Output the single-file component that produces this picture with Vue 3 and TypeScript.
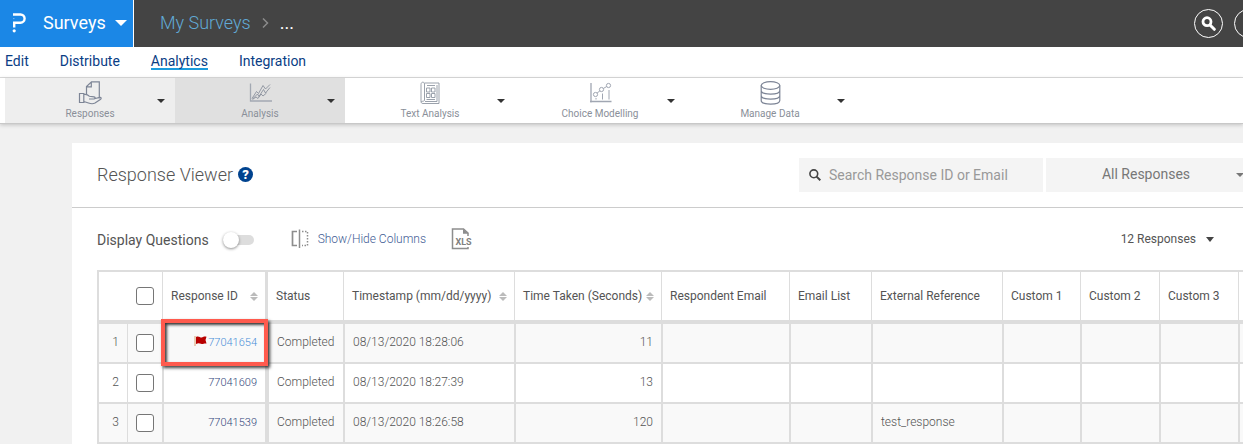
<script setup lang="ts">
import { ref } from 'vue'

interface ResponseRow {
  id: string
  flagged: boolean
  status: string
  timestamp: string
  seconds: number
  reference: string
}

const navItems = ['Edit', 'Distribute', 'Analytics', 'Integration']
const activeNav = ref('Analytics')

const tools = [
  { key: 'responses', label: 'Responses' },
  { key: 'analysis', label: 'Analysis' },
  { key: 'text', label: 'Text Analysis' },
  { key: 'choice', label: 'Choice Modelling' },
  { key: 'data', label: 'Manage Data' },
]

const columns = [
  { label: 'Response ID', key: 'id', sortable: true },
  { label: 'Status', key: 'status', sortable: false },
  { label: 'Timestamp (mm/dd/yyyy)', key: 'time', sortable: true },
  { label: 'Time Taken (Seconds)', key: 'taken', sortable: true },
  { label: 'Respondent Email', key: 'email', sortable: false },
  { label: 'Email List', key: 'list', sortable: false },
  { label: 'External Reference', key: 'ref', sortable: false },
  { label: 'Custom 1', key: 'c1', sortable: false },
  { label: 'Custom 2', key: 'c2', sortable: false },
  { label: 'Custom 3', key: 'c3', sortable: false },
]

const rows: ResponseRow[] = [
  { id: '77041654', flagged: true, status: 'Completed', timestamp: '08/13/2020 18:28:06', seconds: 11, reference: '' },
  { id: '77041609', flagged: false, status: 'Completed', timestamp: '08/13/2020 18:27:39', seconds: 13, reference: '' },
  { id: '77041539', flagged: false, status: 'Completed', timestamp: '08/13/2020 18:26:58', seconds: 120, reference: 'test_response' },
]

const search = ref('')
const displayQuestions = ref(false)
const selected = ref<string[]>([])
const allSelected = ref(false)

function toggleAll() {
  selected.value = allSelected.value ? rows.map((r) => r.id) : []
}
</script>

<template>
  <div class="page">
    <header class="topbar">
      <button class="product" type="button">
        <svg class="logo" width="14" height="20" viewBox="0 0 14 20" fill="none" stroke="#fff" stroke-width="2.4">
          <path d="M1 1.500H8.500A3.800 3.800 0 0 1 8.500 9.700H2.200V14.500" />
          <path d="M1 5.600H2.500" stroke-width="1" opacity=".4" />
          <circle cx="2.200" cy="17.800" r="1.600" fill="#fff" stroke="none" />
        </svg>
        <span>Surveys</span>
        <svg width="12" height="6" viewBox="0 0 12 6"><path d="M0 0H12L6 6Z" fill="#fff" /></svg>
      </button>
      <nav class="crumbs" aria-label="Breadcrumb">
        <a href="#">My Surveys</a>
        <svg width="7" height="10" viewBox="0 0 7 10" fill="none" stroke="#8b8b8b" stroke-width="1.5"><path d="M1 .5 5.5 5 1 9.5" /></svg>
        <span>...</span>
      </nav>
      <div class="actions">
        <button class="round" type="button" aria-label="Search">
          <svg width="15" height="15" viewBox="0 0 15 15" fill="none" stroke="#fff">
            <circle cx="6" cy="5.7" r="4" stroke-width="2.800" />
            <path d="M9 9 13.3 13.3" stroke-width="3" stroke-linecap="round" />
          </svg>
        </button>
        <button class="round" type="button" aria-label="Account"></button>
      </div>
    </header>

    <nav class="nav" aria-label="Survey">
      <a v-for="n in navItems" :key="n" href="#" :class="{ active: n === activeNav }" @click.prevent="activeNav = n">{{ n }}</a>
    </nav>

    <div class="toolbar">
      <div v-for="t in tools" :key="t.key" class="tool" :class="t.key">
        <button class="tool-main" type="button">
          <svg v-if="t.key === 'responses'" width="24" height="24" viewBox="0 0 24 24" fill="none" stroke="#7d8596" stroke-width="1.2">
            <path d="M8.500 13V5.500L13.500.8H21.300V17.500M8.500 5.800H13.300V1" />
            <path d="M1.500 12.500H5.800V21.500H1.500ZM5.800 13.500C8.500 12.800 10 13.800 11.500 15.300L16 15.800C17.700 16.200 17.300 18 15.800 18H11M17.300 17.500 21.800 16.300C23.500 16.200 23.500 17.800 22.300 18.500L17 22C15.200 23 12.500 22.800 10.500 22L5.800 20.500" />
          </svg>
          <svg v-else-if="t.key === 'analysis'" width="24" height="24" viewBox="0 0 24 24" fill="none" stroke="#7f8794" stroke-width=".8">
            <path d="M2.500 2.500V20H24" stroke="#a2a8b2" stroke-width="1.300" />
            <path d="M4 17.500 8.500 10.500 10.500 12.500 15 4.500 17.500 8 22 3.500M4.500 18 9.500 13 11 15.500 15.500 8.500 17.500 12 22 6.500M4.500 18.500 8 16 10 17.500 13 13 15 15 18.500 12" />
          </svg>
          <svg v-else-if="t.key === 'text'" width="24" height="24" viewBox="0 0 24 24" fill="none" stroke="#9097a3" stroke-width=".9">
            <path d="M6.500 2H21V22.500H5C3.500 22.500 3 21.500 3 20.500V3.500C3 .5 6.500.5 6.500 3V19.500C6 20.500 3.500 20 3 21M19 4V20.500H7" />
            <path d="M9 4.500H17M8.500 7H12V11H8.500ZM13.500 7H17V11H13.500ZM8.500 12.500H12V16.500H8.500ZM13.500 12.500H17V16.500H13.500ZM8.500 18.500H17" />
          </svg>
          <svg v-else-if="t.key === 'choice'" width="24" height="24" viewBox="0 0 24 24" fill="none" stroke="#a0a6b2" stroke-width="1">
            <path d="M3 2V21.500M2 20.500H23.500" stroke-width="1.300" />
            <circle cx="7.500" cy="13.500" r="2.100" /><circle cx="13.500" cy="8.500" r="2.100" /><circle cx="20.500" cy="4.500" r="2.100" />
            <path d="M9.100 12 11.900 9.900M15.300 7.500 18.700 5.500M8 17V18.500M14.500 12.500V18.500M21 9V18.500" />
          </svg>
          <svg v-else width="24" height="24" viewBox="0 0 24 24" fill="none" stroke="#7d8596" stroke-width="1.200">
            <ellipse cx="12.500" cy="4.500" rx="9.300" ry="3.800" />
            <path d="M3.200 4.500V19.500C3.200 24.300 21.800 24.300 21.800 19.500V4.500M3.200 9.500C3.200 14.300 21.800 14.300 21.800 9.500M3.200 14.500C3.200 19.300 21.800 19.300 21.800 14.500" />
          </svg>
          <span>{{ t.label }}</span>
        </button>
        <button class="tool-caret" type="button" :aria-label="t.label + ' menu'">
          <svg width="8" height="4" viewBox="0 0 8 4"><path d="M0 0H8L4 4Z" fill="#333" /></svg>
        </button>
      </div>
    </div>

    <main class="card">
      <div class="card-head">
        <h1>Response Viewer</h1>
        <button class="help" type="button" aria-label="Help">?</button>
        <label class="search">
          <svg width="12" height="12" viewBox="0 0 12 12" fill="none" stroke="#444">
            <circle cx="4.800" cy="4.800" r="3.900" stroke-width="1.600" />
            <path d="M7.600 7.600 11.300 11.300" stroke-width="2" />
          </svg>
          <input v-model="search" type="text" placeholder="Search Response ID or Email" aria-label="Search Response ID or Email" />
        </label>
        <div class="filter">
          <select aria-label="Response filter"><option>All Responses</option></select>
          <svg width="8" height="4" viewBox="0 0 8 4"><path d="M0 0H8L4 4Z" fill="#777" /></svg>
        </div>
      </div>

      <div class="controls">
        <label class="toggle">
          <span>Display Questions</span>
          <input v-model="displayQuestions" type="checkbox" />
        </label>
        <button class="columns" type="button">
          <svg width="18" height="20" viewBox="0 0 18 20" fill="none" stroke="#8d8d8d">
            <path d="M6 2.500H1.500V16.500H6" stroke-width="1.700" />
            <path d="M8.500 .5V19" stroke-width="1.500" />
            <path d="M11 2.500H16.500V16.500H11" stroke-width="1.500" stroke-dasharray="1.500 1.500" />
          </svg>
          <span>Show/Hide Columns</span>
        </button>
        <button class="xls" type="button" aria-label="Export to XLS">
          <svg width="22" height="22" viewBox="0 0 22 22" fill="none" stroke="#8d8d8d" stroke-width="1.500">
            <path d="M17 8V5L12.500 1H1.500V20.500H17V19" />
            <path d="M12 .8V5.800H17.500Z" fill="#8d8d8d" stroke="none" />
            <text x="4.500" y="17" font-size="9" font-weight="700" fill="#808080" stroke="none">XLS</text>
          </svg>
        </button>
        <button class="count" type="button">
          <span>12 Responses</span>
          <svg width="8" height="5" viewBox="0 0 8 5"><path d="M0 0H8L4 5Z" fill="#444" /></svg>
        </button>
      </div>

      <div class="table-wrap">
        <table>
          <colgroup>
            <col class="w-index" /><col class="w-check" />
            <col v-for="c in columns" :key="c.key" :class="'w-' + c.key" />
            <col />
          </colgroup>
          <thead>
            <tr>
              <th colspan="2" class="check-head">
                <input v-model="allSelected" type="checkbox" aria-label="Select all responses" @change="toggleAll" />
              </th>
              <th v-for="c in columns" :key="c.key" scope="col" :class="{ frozen: c.key === 'status' }">
                <span class="th">
                  {{ c.label }}
                  <svg v-if="c.sortable" width="8" height="9" viewBox="0 0 8 9"><path d="M0 4 4 0 8 4ZM0 5H8L4 9Z" fill="#bbb" /></svg>
                </span>
              </th>
              <th></th>
            </tr>
          </thead>
          <tbody>
            <tr v-for="(r, i) in rows" :key="r.id">
              <td class="index">{{ i + 1 }}</td>
              <td class="check"><input v-model="selected" type="checkbox" :value="r.id" :aria-label="'Select ' + r.id" /></td>
              <td class="id" :class="{ flagged: r.flagged }">
                <svg v-if="r.flagged" width="13" height="10" viewBox="0 0 13 10">
                  <path d="M1 0V10" stroke="#d8a070" stroke-width="1" />
                  <path d="M2 1C5-.5 6 2 8 1.500 10 .3 11 .5 12.500.8L11.500 4 12.500 7.500C10 7 9 8.500 7 7.800 5 7 4 7 2 8Z" fill="#b80000" />
                </svg>
                <a href="#">{{ r.id }}</a>
                <span v-if="r.flagged" class="highlight"></span>
              </td>
              <td class="frozen">{{ r.status }}</td>
              <td>{{ r.timestamp }}</td>
              <td class="num">{{ r.seconds }}</td>
              <td></td>
              <td></td>
              <td>{{ r.reference }}</td>
              <td></td>
              <td></td>
              <td></td>
              <td></td>
            </tr>
          </tbody>
        </table>
      </div>
    </main>
  </div>
</template>

<style>
body {
  margin: 0;
  background: #f1f1f1;
}
</style>

<style scoped>
.page {
  font-family: Roboto, "Noto Sans", sans-serif;
  font-size: 12px;
  color: #545454;
  overflow: hidden;
}
.page * {
  box-sizing: border-box;
}
button {
  font: inherit;
  color: inherit;
  background: none;
  border: 0;
  padding: 0;
  margin: 0;
}
a {
  text-decoration: none;
  color: inherit;
}
svg {
  display: block;
  flex: none;
}
.topbar {
  display: flex;
  height: 47px;
  background: #444;
  font-size: 18px;
}
.product {
  display: flex;
  align-items: center;
  gap: 9px;
  width: 134px;
  padding-left: 12px;
  padding-bottom: 2px;
  background: #1b87e6;
  border-right: 1px solid #fff;
  color: #fff;
}
.logo {
  margin-right: 8px;
}
.crumbs {
  display: flex;
  align-items: center;
  gap: 11px;
  padding: 0 0 2px 26px;
  color: #fff;
}
.crumbs a {
  color: #61aad6;
  font-weight: 300;
}
.actions {
  display: flex;
  align-items: center;
  gap: 11px;
  margin: 0 -20px 0 auto;
}
.round {
  display: grid;
  place-items: center;
  width: 29px;
  height: 29px;
  border: 1px solid #fff;
  border-radius: 50%;
}
.nav {
  display: flex;
  align-items: flex-start;
  gap: 31px;
  height: 31px;
  padding: 5px 5px 0;
  background: #fff;
  border-bottom: 1px solid #ddd;
  font-size: 14px;
  line-height: 18px;
  color: #0a3d85;
}
.nav a {
  border-bottom: 2px solid transparent;
  height: 18px;
}
.nav .active {
  border-color: #1b9bdc;
}
.toolbar {
  position: relative;
  display: flex;
  height: 46px;
  padding-left: 5px;
  background: #fff;
  border-bottom: 1px solid #c8c8c8;
  box-shadow: 0 1px 4px rgba(0, 0, 0, 0.2);
}
.tool {
  display: grid;
  grid-template-columns: 28px 1fr 28px;
  width: 170px;
}
.tool.responses {
  background: #eee;
}
.tool.analysis {
  background: #e0e0e0;
}
.tool-main {
  grid-column: 2;
  display: flex;
  flex-direction: column;
  align-items: center;
  justify-content: center;
  gap: 2px;
  font-size: 10px;
  line-height: 14px;
  color: #8a8f99;
}
.tool-caret {
  display: grid;
  place-items: center;
}
.card {
  margin: 19px 0 0 72px;
  background: #fff;
}
.card-head {
  display: flex;
  align-items: center;
  gap: 3px;
  padding: 15px 0 15px 25px;
  margin-right: -3px;
  border-bottom: 1px solid #ccc;
}
h1 {
  margin: 0 2px 2px 0;
  font-size: 18px;
  font-weight: 300;
}
.help {
  width: 15px;
  height: 15px;
  margin-bottom: 2px;
  border-radius: 50%;
  background: #00438f;
  color: #fff;
  font-size: 13px;
  font-weight: 900;
  line-height: 15px;
}
.search {
  display: flex;
  align-items: center;
  gap: 8px;
  width: 244px;
  height: 34px;
  margin-left: auto;
  padding-left: 10px;
  background: #f4f4f4;
}
.search input {
  flex: 1;
  min-width: 0;
  padding: 0;
  border: 0;
  outline: 0;
  background: none;
  font: inherit;
  font-size: 14px;
  color: #545454;
}
.search input::placeholder {
  color: #999;
}
.filter {
  display: grid;
  align-items: center;
  width: 200px;
  height: 34px;
  background: #f4f4f4;
}
.filter select {
  grid-area: 1 / 1;
  height: 34px;
  padding: 0 0 2px;
  border: 0;
  background: none;
  appearance: none;
  font: inherit;
  font-size: 14px;
  color: #777;
  text-align-last: center;
}
.filter svg {
  grid-area: 1 / 1;
  justify-self: end;
  margin-right: 2px;
  pointer-events: none;
}
.controls {
  display: flex;
  align-items: center;
  height: 62px;
  padding: 0 29px 0 25px;
}
.toggle {
  display: flex;
  align-items: center;
  gap: 14px;
  padding-top: 2px;
  font-size: 14px;
}
.toggle input {
  appearance: none;
  display: flex;
  align-items: center;
  width: 31px;
  height: 10px;
  margin: 0;
  border-radius: 5px;
  background: #ddd;
}
.toggle input::before {
  content: "";
  flex: none;
  width: 16px;
  height: 16px;
  border-radius: 50%;
  background: #fff;
  box-shadow: 0 1px 3px rgba(0, 0, 0, 0.45);
}
.toggle input:checked::before {
  margin-left: auto;
}
.columns {
  display: flex;
  align-items: center;
  gap: 9px;
  margin-left: 37px;
  color: #3f5c94;
  font-weight: 300;
}
.xls {
  margin-left: 25px;
}
.count {
  display: flex;
  align-items: center;
  gap: 10px;
  margin-left: auto;
}
.table-wrap {
  padding-left: 25px;
}
table {
  width: 100%;
  table-layout: fixed;
  border-collapse: separate;
  border-spacing: 0;
  border: solid #ddd;
  border-width: 2px 0 2px 2px;
}
.w-index { width: 28px; }
.w-check { width: 35px; }
.w-id { width: 103px; }
.w-status { width: 78px; }
.w-time { width: 171px; }
.w-taken { width: 147px; }
.w-email { width: 128px; }
.w-list { width: 82px; }
.w-ref { width: 131px; }
.w-c1 { width: 78px; }
.w-c2 { width: 79px; }
.w-c3 { width: 79px; }
th,
td {
  padding: 0 7px 0 8px;
  border: solid #ddd;
  border-width: 0 0 0 1px;
  text-align: left;
  white-space: nowrap;
}
th {
  height: 48px;
  font-weight: 400;
}
th:last-child,
td:last-child {
  padding: 0;
}
th.frozen {
  border-left-width: 3px;
}
.th {
  display: flex;
  align-items: center;
  justify-content: space-between;
}
td {
  height: 40px;
  padding: 0 8px 2px;
  border-width: 2px 0 0 2px;
  font-weight: 300;
}
td.frozen {
  border-left-width: 4px;
}
tbody tr:first-child td {
  height: 42px;
  border-top-width: 4px;
}
tbody tr:nth-child(odd) td {
  background: #f9f9f9;
}
th.check-head,
td.index {
  border-left-width: 0;
}
td.index {
  padding: 0 8px 2px 0;
  text-align: right;
}
td.check {
  border-left-width: 1px;
}
th.check-head,
td.check {
  padding: 0 8px 0 0;
  text-align: right;
}
.check-head input,
.check input {
  appearance: none;
  display: block;
  width: 18px;
  height: 18px;
  margin: 0 0 0 auto;
  border: 1px solid #767676;
  border-radius: 3px;
  background: #fff;
}
.check-head input:checked,
.check input:checked {
  background: #1b87e6;
}
td.num {
  text-align: right;
}
td.id {
  text-align: right;
  font-size: 11px;
  color: #34477c;
}
.id svg {
  display: inline-block;
  margin-right: 1px;
}
td.flagged {
  position: relative;
  color: #4a8fd8;
}
/* Callout frame laid over the flagged response */
.highlight {
  position: absolute;
  inset: -5px -3px -4px -3px;
  border: 4px solid #ff5a4d;
  box-shadow: 2px 2px 3px rgba(0, 0, 0, 0.75), inset 2px 2px 3px rgba(0, 0, 0, 0.75);
  pointer-events: none;
}
</style>
